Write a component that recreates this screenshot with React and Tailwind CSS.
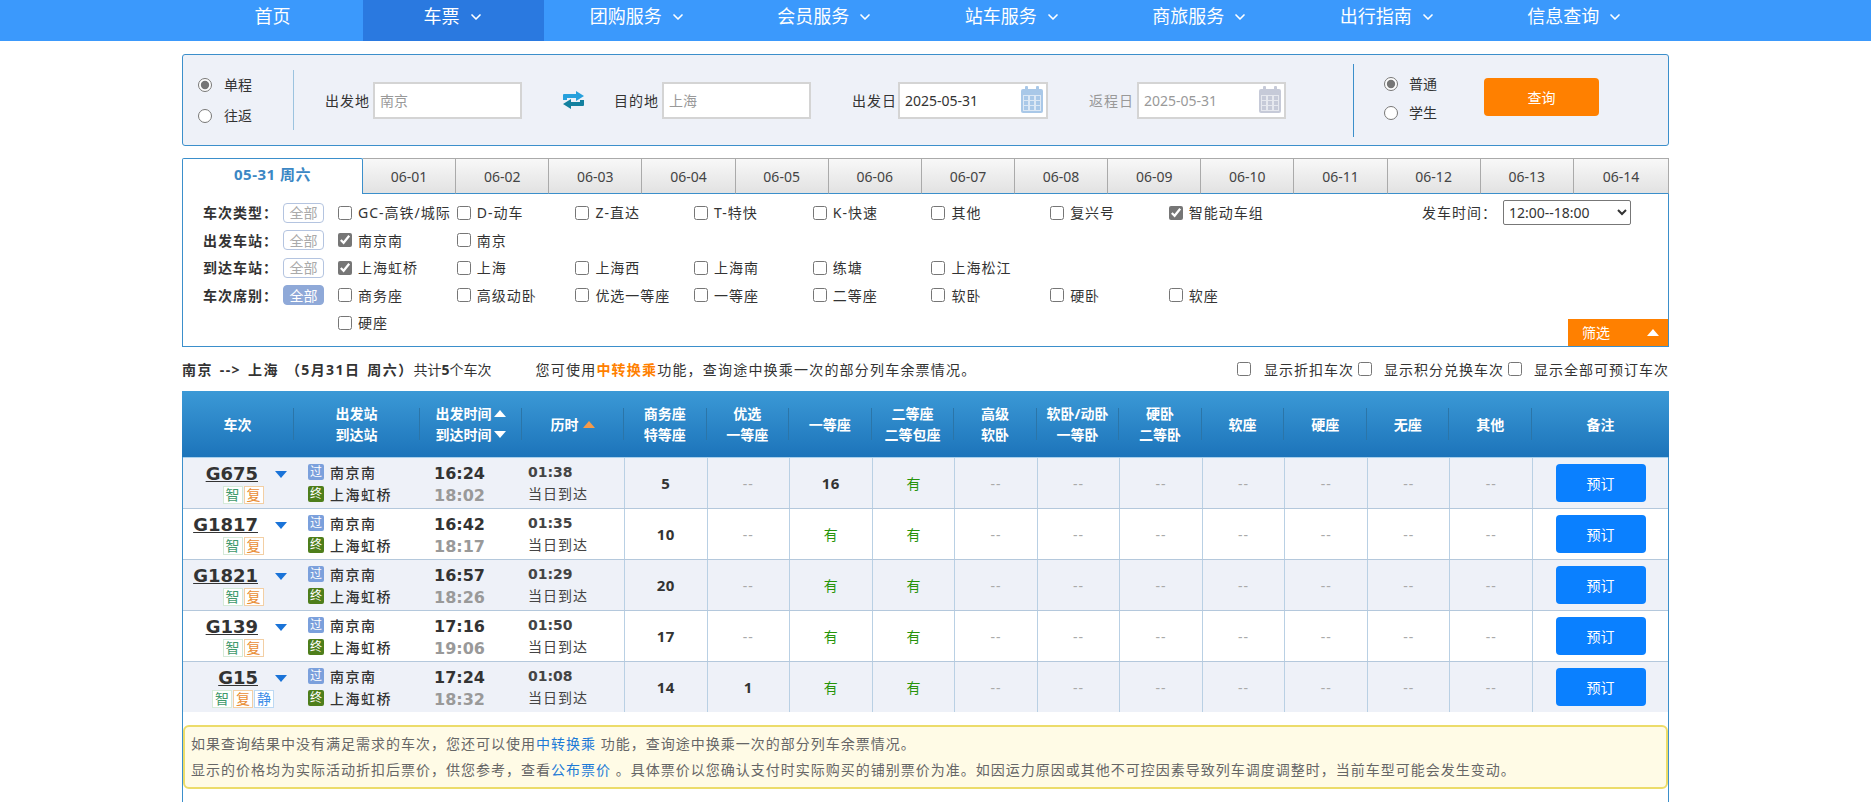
import { ChevronDown } from "lucide-react"

const sans = "font-['Noto_Sans','Noto_Sans_CJK_SC',sans-serif]"
const num = "font-['DejaVu_Sans','Noto_Sans_CJK_SC',sans-serif] font-bold"

const navItems = ["团购服务", "会员服务", "站车服务", "商旅服务", "出行指南", "信息查询"]
const days = ["06-01", "06-02", "06-03", "06-04", "06-05", "06-06", "06-07", "06-08", "06-09", "06-10", "06-11", "06-12", "06-13", "06-14"]

const filterRows = [
  { label: "车次类型：", items: [["GC-高铁/城际"], ["D-动车"], ["Z-直达"], ["T-特快"], ["K-快速"], ["其他"], ["复兴号"], ["智能动车组", true]] },
  { label: "出发车站：", items: [["南京南", true], ["南京"]] },
  { label: "到达车站：", items: [["上海虹桥", true], ["上海"], ["上海西"], ["上海南"], ["练塘"], ["上海松江"]] },
  { label: "车次席别：", on: true, items: [["商务座"], ["高级动卧"], ["优选一等座"], ["一等座"], ["二等座"], ["软卧"], ["硬卧"], ["软座"]] },
  { label: "", noBtn: true, items: [["硬座"]] },
]

const trains = [
  { no: "G675", dep: "16:24", arr: "18:02", dur: "01:38", biz: "5", pre: "--", first: "16" },
  { no: "G1817", dep: "16:42", arr: "18:17", dur: "01:35", biz: "10", pre: "--", first: "有" },
  { no: "G1821", dep: "16:57", arr: "18:26", dur: "01:29", biz: "20", pre: "--", first: "有" },
  { no: "G139", dep: "17:16", arr: "19:06", dur: "01:50", biz: "17", pre: "--", first: "有" },
  { no: "G15", dep: "17:24", arr: "18:32", dur: "01:08", biz: "14", pre: "1", first: "有", quiet: true },
]

const cols = "grid grid-cols-[112px_126px_102px_102px_repeat(11,82.55px)_1fr]"
const wrap = "ml-[182px] w-[1487px]"

function CalendarIcon({ color, inner }) {
  return (
    <svg width="22" height="27" viewBox="0 0 22 27" className="absolute right-[5px] top-[4px]">
      <rect x="0" y="3" width="22" height="24" rx="2" fill={color} />
      <rect x="4" y="0" width="3" height="6" rx="1" fill={color} />
      <rect x="15" y="0" width="3" height="6" rx="1" fill={color} />
      <rect x="2" y="9" width="18" height="16" fill={inner} />
      {[10, 15, 20].map((y) =>
        [3, 9, 15].map((x) => <rect key={x + "-" + y} x={x} y={y} width="4" height="4" fill={color} />)
      )}
    </svg>
  )
}

function SwapIcon() {
  return (
    <svg width="21" height="18" viewBox="0 0 21 18">
      <path d="M0 9V4a1 1 0 0 1 1-1h12V0l8 5-8 5V7H4v2z" fill="#27a0dc" />
      <path d="M21 9v5a1 1 0 0 1-1 1H8v3l-8-5 8-5v3h9V9z" fill="#12809f" />
    </svg>
  )
}

function Triangle({ up, color, className }) {
  return (
    <svg width="12" height="7" viewBox="0 0 12 7" className={className}>
      <path d={up ? "M6 0l6 7H0z" : "M0 0h12L6 7z"} fill={color} />
    </svg>
  )
}

function Badge({ text, cls }) {
  return <span className={"flex h-[18px] w-[20px] items-center justify-center border bg-white text-[14px] leading-none " + cls}>{text}</span>
}

function Station({ tag, bg, name }) {
  return (
    <div className="flex h-[22px] items-center">
      <span className={"flex h-[16px] w-[16px] items-center justify-center rounded-[2px] text-[12px] leading-none text-white " + bg}>{tag}</span>
      <span className="ml-[6px] text-[14px] font-medium tracking-[1.5px] text-[#333]">{name}</span>
    </div>
  )
}

function Seat({ value }) {
  let inner = <span className="text-[15px] font-bold tracking-[0.5px] text-[#333]">{value}</span>
  if (value === "--") inner = <span className="text-[14px] tracking-[1px] text-[#aaa]">--</span>
  if (value === "有") inner = <span className="text-[14px] text-[#26940a]">有</span>
  return <div className="flex items-center justify-center border-r border-[#b9d0e4]">{inner}</div>
}

function Label({ text, cls = "" }) {
  return <span className={"tracking-[1px] " + cls}>{text}</span>
}

export default function App() {
  return (
    <div className={sans + " h-[802px] overflow-hidden bg-white text-[14px] text-[#333]"}>
      <div className="h-[41px] bg-[#3b99fc]">
        <div className={wrap + " flex h-full text-[18px] text-white"}>
          <div className="flex w-[181px] items-start justify-center pt-[3px]">首页</div>
          <div className="flex w-[181px] items-start justify-center gap-[8px] bg-[#2a79e0] pt-[3px]">
            车票
            <ChevronDown size={16} strokeWidth={2.5} className="mt-[6px]" />
          </div>
          {navItems.map((t) => (
            <div key={t} className="flex flex-1 items-start justify-center gap-[8px] pt-[3px]">
              {t}
              <ChevronDown size={16} strokeWidth={2.5} className="mt-[6px]" />
            </div>
          ))}
        </div>
      </div>

      <div className={wrap + " mt-[13px] flex h-[92px] items-center rounded-[3px] border border-[#3b8fcb] bg-[#eef1f8] pl-[15px]"}>
        <div className="flex w-[95px] flex-col gap-[13px]">
          <label className="flex h-[18px] items-center gap-[12px]">
            <input type="radio" defaultChecked name="trip" className="size-[14px] accent-[#767676]" />
            单程
          </label>
          <label className="flex h-[18px] items-center gap-[12px]">
            <input type="radio" name="trip" className="size-[14px]" />
            往返
          </label>
        </div>
        <div className="h-[60px] w-px bg-[#9cc3df]" />
        <span className="ml-[31px] mr-[3px]"><Label text="出发地" /></span>
        <input readOnly placeholder="南京" className="h-[37px] w-[149px] border-2 border-[#d4d4d4] bg-white px-[5px] placeholder:text-[#999]" />
        <div className="ml-[41px] mr-[30px]"><SwapIcon /></div>
        <span className="mr-[3px]"><Label text="目的地" /></span>
        <input readOnly placeholder="上海" className="h-[37px] w-[149px] border-2 border-[#d4d4d4] bg-white px-[5px] placeholder:text-[#999]" />
        <span className="ml-[41px] mr-[1px]"><Label text="出发日" /></span>
        <div className="relative">
          <input readOnly value="2025-05-31" className="h-[37px] w-[150px] border-2 border-[#d4d4d4] bg-white px-[5px] text-[#333]" />
          <CalendarIcon color="#a9c8e8" inner="#dce8f5" />
        </div>
        <span className="ml-[41px] mr-[3px]"><Label text="返程日" cls="text-[#999]" /></span>
        <div className="relative">
          <input readOnly value="2025-05-31" className="h-[37px] w-[149px] border-2 border-[#d4d4d4] bg-white px-[5px] text-[#999]" />
          <CalendarIcon color="#c6cad8" inner="#e6e8ee" />
        </div>
        <div className="ml-[67px] h-[73px] w-px bg-[#3b8fcb]" />
        <div className="ml-[30px] flex w-[100px] -translate-y-[2px] flex-col gap-[11px]">
          <label className="flex h-[18px] items-center gap-[11px]">
            <input type="radio" defaultChecked name="who" className="size-[14px] accent-[#767676]" />
            普通
          </label>
          <label className="flex h-[18px] items-center gap-[11px]">
            <input type="radio" name="who" className="size-[14px]" />
            学生
          </label>
        </div>
        <button className="h-[38px] w-[115px] -translate-y-[3px] rounded-[4px] bg-[#ff8000] text-white">查询</button>
      </div>

      <div className={wrap + " mt-[12px] flex h-[36px]"}>
        <div className="w-[181px] rounded-t-[2px] border-x border-t border-[#3b8fcb] bg-white pt-[4px] text-center text-[15px] font-bold tracking-[0.5px] text-[#3b87c4]">05-31 周六</div>
        {days.map((d) => (
          <div key={d} className="flex w-[93.15px] last:flex-1 items-center justify-center border-r border-t border-[#aaa] border-b-[#3b8fcb] border-b bg-linear-to-b from-[#f8f8f8] to-[#e2e2e2] text-[#444]">{d}</div>
        ))}
      </div>

      <div className={wrap + " relative h-[153px] border-x border-b border-[#3b8fcb] pl-[20px] pt-[5px]"}>
        {filterRows.map((row, i) => (
          <div key={i} className="flex h-[27.5px] items-center">
            <span className="w-[80px] font-bold tracking-[1px]">{row.label}</span>
            {row.noBtn ? (
              <span className="w-[41px]" />
            ) : (
              <span className={"flex h-[20px] w-[41px] items-center justify-center rounded-[4px] border text-[14px] " + (row.on ? "border-[#8fa9d8] bg-[#8fa9d8] text-white" : "border-[#b4c4e0] text-[#aaa]")}>全部</span>
            )}
            <div className="ml-[14px] flex">
              {row.items.map(([t, c]) => (
                <label key={t} className="flex w-[118.7px] items-center gap-[6px] whitespace-nowrap tracking-[1px]">
                  <input type="checkbox" defaultChecked={!!c} className="size-[14px] accent-[#767676]" />
                  {t}
                </label>
              ))}
            </div>
          </div>
        ))}
        <div className="absolute right-[37px] top-[6px] flex items-center gap-[6px] tracking-[1px]">
          发车时间：
          <select defaultValue="a" className="h-[25px] w-[128px] rounded-[2px] border border-[#777] bg-white px-[1px] tracking-normal">
            <option value="a">12:00--18:00</option>
          </select>
        </div>
        <div className="absolute bottom-0 right-0 flex h-[27px] w-[100px] items-center justify-between bg-[#ff8000] pl-[14px] pr-[9px] text-white">
          筛选
          <Triangle up color="#fff" />
        </div>
      </div>

      <div className={wrap + " flex h-[44px] items-center whitespace-nowrap"}>
        <span className="font-bold tracking-[1.4px] [word-spacing:2px]">南京 --&gt; 上海 （5月31日 周六）</span>
        <span>共计<b>5</b>个车次</span>
        <span className="ml-[44px] tracking-[1.2px]">您可使用<b className="font-bold text-[#ff8000]">中转换乘</b>功能，查询途中换乘一次的部分列车余票情况。</span>
        <div className="ml-auto flex items-center tracking-[1px]">
          <input type="checkbox" className="mr-[13px] size-[14px]" />
          显示折扣车次
          <input type="checkbox" className="mx-[4px] size-[14px]" />
          <span className="ml-[8px]">显示积分兑换车次</span>
          <input type="checkbox" className="mx-[4px] size-[14px]" />
          <span className="ml-[8px]">显示全部可预订车次</span>
        </div>
      </div>

      <div className={wrap + " h-[411px] border-x border-[#3b8fcb]"}>
        <div className={cols + " -mx-px h-[66px] bg-linear-to-b from-[#3b99d6] to-[#1c74ba] text-center text-[14px] font-bold leading-[21px] text-white"}>
          {[
            ["车次"],
            ["出发站", "到达站"],
            ["出发时间", "到达时间"],
            ["历时"],
            ["商务座", "特等座"],
            ["优选", "一等座"],
            ["一等座"],
            ["二等座", "二等包座"],
            ["高级", "软卧"],
            ["软卧/动卧", "一等卧"],
            ["硬卧", "二等卧"],
            ["软座"],
            ["硬座"],
            ["无座"],
            ["其他"],
            ["备注"],
          ].map((h, i) => (
            <div key={i} className="flex items-center justify-center">
              <div className={"flex h-[32px] w-full items-center justify-center " + (i < 15 ? "border-r border-[#2b75a8]" : "")}>
                <div>
                  {h.map((l, j) => (
                    <div key={l} className="flex items-center justify-center gap-[2px]">
                      {l}
                      {i === 2 && <Triangle up={j === 0} color="#fff" />}
                    </div>
                  ))}
                </div>
                {i === 3 && <Triangle up color="#f59a4a" className="ml-[4px]" />}
              </div>
            </div>
          ))}
        </div>
        {trains.map((t, i) => (
          <div key={t.no} className={cols + " h-[51px] border-t " + (i === 0 ? "border-[#a8d0ec] " : "border-[#b4c8dc] ") + (i % 2 === 0 ? "bg-[#eef1f8]" : "bg-white")}>
            <div className="relative">
              <div className={num + " absolute right-[37px] top-[4px] text-[18px] leading-[24px] text-[#333] underline"}>{t.no}</div>
              <Triangle color="#1a73d8" className="absolute right-[8px] top-[13px]" />
              <div className="absolute left-[8px] right-0 top-[28px] flex justify-center gap-px">
                <Badge text="智" cls="border-[#d5ead8] text-[#3f9a6c]" />
                <Badge text="复" cls="border-[#f3cfa4] text-[#e98d35]" />
                {t.quiet && <Badge text="静" cls="border-[#bcd9f3] text-[#3a8ce8]" />}
              </div>
            </div>
            <div className="pl-[13px] pt-[3px]">
              <Station tag="过" bg="bg-[#7ba0dc]" name="南京南" />
              <Station tag="终" bg="bg-[#4e7e1b]" name="上海虹桥" />
            </div>
            <div className={num + " pl-[13px] pt-[5px] text-[16px] leading-[22px]"}>
              <div className="text-[#333]">{t.dep}</div>
              <div className="text-[#999]">{t.arr}</div>
            </div>
            <div className="border-r border-[#b9d0e4] pl-[5px] pt-[4px] leading-[21px] text-[#444]">
              <div className={num + " text-[14px]"}>{t.dur}</div>
              <div className="tracking-[1px]">当日到达</div>
            </div>
            <Seat value={t.biz} />
            <Seat value={t.pre} />
            <Seat value={t.first} />
            <Seat value="有" />
            {Array.from({ length: 7 }).map((_, k) => <Seat key={k} value="--" />)}
            <div className="flex items-center justify-center">
              <button className="h-[38px] w-[90px] rounded-[4px] bg-[#0a80ff] text-white">预订</button>
            </div>
          </div>
        ))}
        <div className="mt-[13px] h-[64px] rounded-[6px] border-2 border-[#ecdc6a] bg-[#fffbe6] px-[6px] py-[4px] text-[14px] leading-[26px] tracking-[1px] text-[#666]">
          <div>如果查询结果中没有满足需求的车次，您还可以使用<span className="text-[#1d7ad6]">中转换乘</span> 功能，查询途中换乘一次的部分列车余票情况。</div>
          <div>显示的价格均为实际活动折扣后票价，供您参考，查看<span className="text-[#1d7ad6]">公布票价</span> 。具体票价以您确认支付时实际购买的铺别票价为准。如因运力原因或其他不可控因素导致列车调度调整时，当前车型可能会发生变动。</div>
        </div>
      </div>
    </div>
  )
}
